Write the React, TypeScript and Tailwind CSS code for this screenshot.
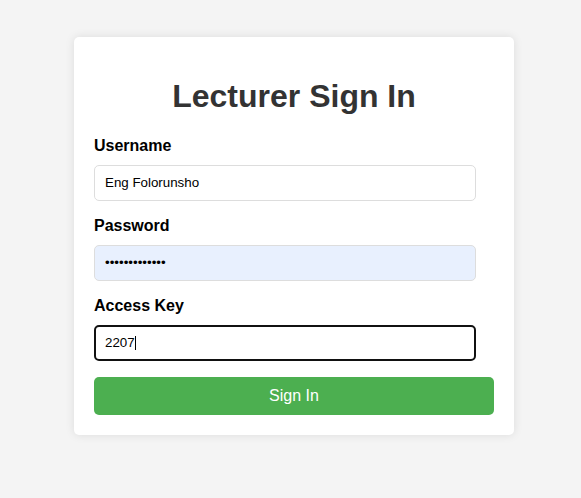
import { useState } from "react";

const FONT = { fontFamily: '"Liberation Sans", Arial, sans-serif' };

const App: () => JSX.Element = () => {
  const [username, setUsername] = useState<string>("Eng Folorunsho");
  const [password, setPassword] = useState<string>("lecturerpass1");

  return (
    <div className="min-h-[498px] w-full bg-[#f4f4f4] pt-[37px] pl-[74px]" style={FONT}>
      <div className="w-[440px] rounded-[5px] bg-white p-5 shadow-[0_0_10px_rgba(0,0,0,0.1)]">
        <h1 className="my-[21.44px] text-center text-[32px] leading-[36.8px] font-bold text-[#333]">
          Lecturer Sign In
        </h1>

        {/* ユーザー名 */}
        <label className="mb-[10px] block text-base leading-[18px] font-bold text-black">Username</label>
        <input
          className="mb-4 block h-9 w-[382px] rounded-[5px] border border-[#ddd] bg-white px-[10px] text-[13.33px] text-black outline-none"
          value={username}
          onChange={(e) => setUsername(e.target.value)}
        />

        <label className="mb-[10px] block text-base leading-[18px] font-bold text-black">Password</label>
        <input
          type="password"
          className="mb-4 block h-9 w-[382px] rounded-[5px] border border-[#ddd] bg-[#e8f0fe] px-[10px] text-[13.33px] text-black outline-none"
          value={password}
          onChange={(e) => setPassword(e.target.value)}
        />

        <label className="mb-[10px] block text-base leading-[18px] font-bold text-black">Access Key</label>
        <div className="mb-4 flex h-9 w-[382px] items-center rounded-[5px] border-2 border-[#111] bg-white px-[9px] text-[13.33px] text-black">
          <span>2207</span>
          <span className="inline-block h-[14px] w-px bg-black" />
        </div>

        <button className="block h-[38px] w-[400px] rounded-[5px] bg-[#4caf50] text-base text-white">
          Sign In
        </button>
      </div>
    </div>
  );
}

export default App;
